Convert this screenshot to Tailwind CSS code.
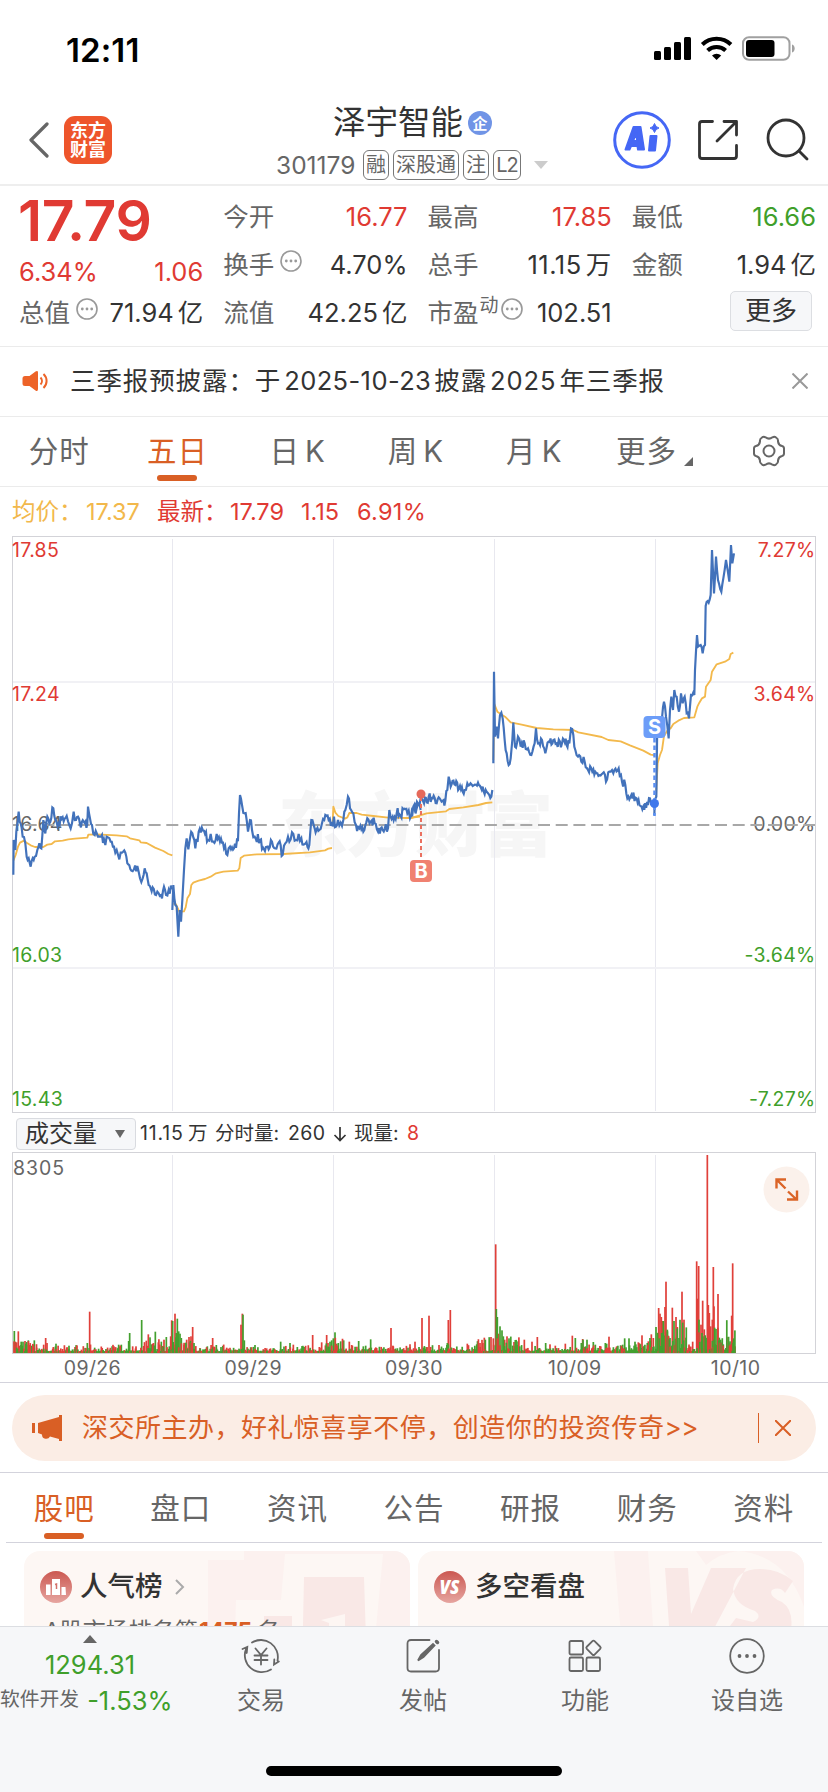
<!DOCTYPE html>
<html lang="zh-CN">
<head>
    <meta charset="UTF-8">
    <meta name="viewport" content="width=device-width, initial-scale=1.0">
    <title>泽宇智能 301179</title>
    <script src="https://cdn.jsdelivr.net/npm/@tailwindcss/browser@4"></script>
</head>
<body class="bg-white text-[#333] font-[Inter,'Noto_Sans_CJK_SC',sans-serif] leading-none">
<div class="w-[828px] h-[1792px] overflow-hidden flex flex-col whitespace-nowrap">

    <!-- Status bar -->
    <div class="h-[98px] shrink-0 flex justify-between items-center pl-[66px] pr-[32px]">
        <div class="text-[33px] font-semibold text-black tracking-[0.1px] pt-[2px]">12:11</div>
        <svg class="w-[144px] h-[28px]" viewBox="0 0 144 28">
            <g fill="#000">
                <rect x="2" y="16" width="7" height="9" rx="1.5"/>
                <rect x="12" y="12" width="7" height="13" rx="1.5"/>
                <rect x="22" y="7" width="7" height="18" rx="1.5"/>
                <rect x="32" y="2" width="7" height="23" rx="1.5"/>
            </g>
            <g fill="none" stroke="#000" stroke-width="4">
                <path d="M50.300 9.500a20.500 20.500 0 0 1 28.600 0"/>
                <path d="M55.600 15.500a13 13 0 0 1 18 0"/>
            </g>
            <path d="M60 20.500a7 7 0 0 1 9.200 0L64.600 25z"/>
            <rect x="91" y="2.200" width="46.500" height="22.600" rx="6" fill="none" stroke="#a0a0a0" stroke-width="2"/>
            <rect x="94" y="5" width="28.500" height="17" rx="3"/>
            <path d="M140 9.500c3.600 1 3.600 7 0 8z" fill="#a0a0a0"/>
        </svg>
    </div>

    <!-- Header -->
    <header class="h-[88px] shrink-0 border-b-2 border-[#eeeeee] flex relative">
        <div class="flex items-center pl-7 gap-[15px] h-[84px]">
            <svg class="w-[21px] h-[36px]" viewBox="0 0 21 36" fill="none" stroke="#666" stroke-width="3.200" stroke-linecap="round" stroke-linejoin="round"><path d="M19 2L3 18l16 16"/></svg>
            <div class="w-12 h-12 rounded-[11px] bg-[#ee552b] text-white text-[18px] leading-[19px] font-bold flex flex-col items-center justify-center">
                <span>东方</span><span>财富</span>
            </div>
        </div>
        <div class="absolute left-[276px] w-[276px] top-[8px]">
            <div class="flex items-center pl-[57px] gap-[5px] h-[34px]">
                <span class="text-[32.500px]">泽宇智能</span>
                <span class="w-6 h-6 rounded-full bg-[#7094e6] text-white text-[15px] font-bold flex items-center justify-center">企</span>
            </div>
            <div class="flex items-center h-[30px] mt-[10px] text-[#666]">
                <span class="text-[24.500px] w-[87px]">301179</span>
                <div class="flex gap-[4px] text-[20px]">
                    <span class="h-[30px] w-[26px] border border-[#777] rounded-[6px] flex items-center justify-center">融</span>
                    <span class="h-[30px] w-[66px] border border-[#777] rounded-[6px] flex items-center justify-center">深股通</span>
                    <span class="h-[30px] w-[26px] border border-[#777] rounded-[6px] flex items-center justify-center">注</span>
                    <span class="h-[30px] w-[28px] border border-[#777] rounded-[6px] flex items-center justify-center tracking-[-1px]">L2</span>
                </div>
                <svg class="w-[14px] h-[8px] ml-[13px]" viewBox="0 0 14 8"><path d="M0 0h14L7 8z" fill="#ccc"/></svg>
            </div>
        </div>
        <svg class="absolute left-[612px] top-[12px] w-[200px] h-[60px]" viewBox="0 0 200 60" fill="none">
            <circle cx="30" cy="30" r="27.300" stroke="#4567f5" stroke-width="3"/>
            <g fill="#4567f5" stroke="#4567f5" stroke-linejoin="round">
                <path d="M13.500 39.500h4l1.500-3.500h6.500l.5 3.500h6L28.500 17h-7zM21 31l3.300-8 .9 8z" stroke-width="2" fill-rule="evenodd"/>
                <path d="M38.500 26h6l-1.500 14.500h-6z" stroke-width="2"/>
                <path d="M42.500 13.500q1 3.800 4.500 4.500-3.500.9-4.500 4.500-.9-3.600-4.500-4.500 3.600-.7 4.500-4.500z" stroke-width="1"/>
            </g>
            <g stroke="#333" stroke-width="2.800" stroke-linecap="round" stroke-linejoin="round">
                <path d="M100.500 11.500H90q-2.500 0-2.500 2.500v32q0 2.500 2.500 2.500h32q2.500 0 2.500-2.500V35.500"/>
                <path d="M112 11.500h12.500V25M124 12l-19 19"/>
                <circle cx="174" cy="28" r="18"/>
                <path d="M187 41l8 8"/>
            </g>
        </svg>
    </header>

    <!-- Quote -->
    <section class="h-[161px] shrink-0 border-b border-[#ebebeb] pt-[7px] pl-[19px] pr-[12px] grid grid-cols-4 gap-x-5 text-[25.5px]">
        <div class="text-[#e03a33]">
            <div class="h-[54px] flex items-center text-[57px] font-semibold tracking-[-0.4px] -ml-px">17.79</div>
            <div class="h-[49px] flex items-center justify-between"><span>6.34%</span><span>1.06</span></div>
            <div class="h-[34px] flex items-center justify-between text-[#333]">
                <span class="flex items-center gap-[6px] text-[#666]">总值<svg class="w-[22px] h-[22px] -mt-2"><use href="#tip"/></svg></span><span>71.94<span class="ml-[4px]">亿</span></span>
            </div>
        </div>
        <div>
            <div class="h-12 flex items-center justify-between"><span class="text-[#666]">今开</span><span class="text-[#e03a33]">16.77</span></div>
            <div class="h-12 flex items-center justify-between"><span class="flex items-center gap-[6px] text-[#666]">换手<svg class="w-[22px] h-[22px] -mt-2"><use href="#tip"/></svg></span><span>4.70%</span></div>
            <div class="h-12 flex items-center justify-between"><span class="text-[#666]">流值</span><span>42.25<span class="ml-[4px]">亿</span></span></div>
        </div>
        <div>
            <div class="h-12 flex items-center justify-between"><span class="text-[#666]">最高</span><span class="text-[#e03a33]">17.85</span></div>
            <div class="h-12 flex items-center justify-between"><span class="text-[#666]">总手</span><span class="tracking-[0.5px]">11.15<span class="ml-[4px]">万</span></span></div>
            <div class="h-12 flex items-center justify-between">
                <span class="flex items-center text-[#666]">市盈<span class="text-[19px] -mt-4 ml-px mr-[2px]">动</span><svg class="w-[22px] h-[22px] -mt-2"><use href="#tip"/></svg></span><span>102.51</span>
            </div>
        </div>
        <div>
            <div class="h-12 flex items-center justify-between"><span class="text-[#666]">最低</span><span class="text-[#3f9f2b]">16.66</span></div>
            <div class="h-12 flex items-center justify-between"><span class="text-[#666]">金额</span><span>1.94<span class="ml-[4px]">亿</span></span></div>
            <div class="h-12 flex items-center justify-end pr-1">
                <button class="w-[82px] h-10 -mt-1 rounded-[5px] border border-[#dcdee2] bg-[#f6f7f9] text-[26px]">更多</button>
            </div>
        </div>
    </section>

    <svg class="hidden">
        <symbol id="tip" viewBox="0 0 22 22">
            <circle cx="11" cy="11" r="10" fill="none" stroke="#999" stroke-width="1.600"/>
            <g fill="#999"><circle cx="6.300" cy="11" r="1.400"/><circle cx="11" cy="11" r="1.400"/><circle cx="15.700" cy="11" r="1.400"/></g>
        </symbol>
    </svg>

    <!-- Notice -->
    <section class="h-[70px] shrink-0 border-b border-[#ebebeb] flex items-center pl-[22px] pr-[20px] pb-px">
        <svg class="w-[27px] h-[22px]" viewBox="0 0 27 22">
            <path d="M3 6h4.500l6-4.500q2.500-1.300 2.500 1V19q0 3-2.500 1.500l-6-4.500H3q-2.500 0-2.500-2.500v-5Q.5 6 3 6z" fill="#ed6328"/>
            <path d="M18.500 7.500a5 5 0 0 1 0 7M21.500 4a9.500 9.500 0 0 1 0 14" fill="none" stroke="#ed6328" stroke-width="2"/>
        </svg>
        <div class="ml-[21px] text-[25.5px] tracking-[0.9px]">三季报预披露：于<span class="mx-[3px] tracking-[0.4px]">2025-10-23</span>披露<span class="mx-[3px]">2025</span>年三季报</div>
        <svg class="w-[16px] h-[16px] ml-auto" viewBox="0 0 16 16" stroke="#999" stroke-width="2"><path d="M.5.5l15 15M15.500.5l-15 15"/></svg>
    </section>

    <!-- Period tabs -->
    <nav class="h-[70px] shrink-0 border-b border-[#ebebeb] grid grid-cols-7 text-[29.500px] tracking-[1px] text-[#666] text-center">
        <div class="pt-[20px]">分时</div>
        <div class="pt-[20px] text-[#d95f25] flex flex-col items-center">五日<span class="w-10 h-[6px] rounded-full bg-[#d95f25] mt-[8px]"></span></div>
        <div class="pt-[20px] pl-1">日<span class="ml-[5px]">K</span></div>
        <div class="pt-[20px] pl-1">周<span class="ml-[5px]">K</span></div>
        <div class="pt-[20px] pl-1">月<span class="ml-[5px]">K</span></div>
        <div class="pt-[20px] pl-2 flex justify-center">更多<svg class="w-[9px] h-[9px] ml-[7px] mt-[20px]" viewBox="0 0 9 9"><path d="M9 0v9H0z" fill="#666"/></svg></div>
        <div class="pt-[18px] flex justify-center">
            <svg class="w-[34px] h-[32px]" viewBox="0 0 34 32" fill="none" stroke="#666" stroke-width="2" stroke-linejoin="round">
                <path d="M10 2.500Q11.500 1 13.500 2.300Q17 5 20.500 2.300Q22.500 1 24 2.500Q26.500 4 26 6.500Q26.500 10.300 30 11Q32 11.500 32 13.500V18.500Q32 20.500 30 21Q26.500 21.700 26 25.500Q26.500 28 24 29.500Q22.500 31 20.500 29.700Q17 27 13.500 29.700Q11.500 31 10 29.500Q7.500 28 8 25.500Q7.500 21.700 4 21Q2 20.500 2 18.500V13.500Q2 11.500 4 11Q7.500 10.300 8 6.500Q7.500 4 10 2.500Z"/>
                <circle cx="17" cy="16" r="5.500"/>
            </svg>
        </div>
    </nav>

    <!-- Legend -->
    <div class="h-[49px] shrink-0 flex items-center pl-3 text-[23.500px] text-[#e03a33]">
        <span class="w-[145px] text-[#f2b84b] flex"><span class="w-[74px]">均价：</span>17.37</span>
        <span class="w-[144px] flex"><span class="w-[73px]">最新：</span>17.79</span>
        <span class="w-[56px]">1.15</span>
        <span class="tracking-[0.3px]">6.91%</span>
    </div>

    <!-- Price chart -->
    <svg class="w-[828px] h-[578px] shrink-0" viewBox="0 536 828 578" font-family="Inter,'Noto Sans CJK SC',sans-serif">
        <text x="278" y="851" font-size="70" font-weight="900" fill="#f6f6f6" textLength="275">东方财富</text>
        <g fill="none" stroke="#e8e8ef">
            <path d="M172.500 539V1111M333.500 539V1111M494.500 539V1111M655.500 539V1111"/>
            <path d="M13 682H815M13 968H815" stroke="#f1f1f5" stroke-width="2"/>
            <rect x="12.500" y="536.500" width="803" height="576" stroke="#d3d3d8"/>
        </g>
        <g font-size="19.500" letter-spacing="0.3" id="priceLabels"></g>
        <path d="M13 825H815" stroke="#a8a8a8" stroke-width="1.800" stroke-dasharray="12 5.700" stroke-dashoffset="6"/>
        <!-- average price -->
        <g fill="none" stroke="#f3b94c" stroke-width="5.500" stroke-linejoin="round">
            <g transform="translate(0 480) scale(.33333)">
                <path d="M40 1142L47 1125 54 1100 60 1088 72 1082 80 1088 92 1096 105 1101 130 1101 142 1094 155 1092 165 1084 188 1082 205 1078 225 1076 262 1073 265 1064 290 1063 350 1066 380 1069 390 1075 418 1081 422 1087 440 1089 465 1103 490 1113 505 1122 517 1126"/>
                <path d="M520 1270L528 1273 538 1295 552 1294 557 1282 562 1255 570 1242 574 1215 580 1208 596 1202 615 1197 632 1190 648 1180 670 1175 713 1172 718 1165 722 1134 732 1127 770 1123 850 1122 930 1117 975 1111 985 1106 996 1104"/>
                <path d="M998 1030L1000 980 1006 998 1015 1008 1035 1016 1042 1012 1048 999 1070 999 1085 1004 1120 1008 1165 1013 1225 1014 1260 1010"/>
            </g>
            <g transform="translate(410 480) scale(.33333)">
                <path d="M0 1015L30 1006 50 1000 108 994 118 987 160 982 205 975 228 969 247 967"/>
                <path d="M250 840L253 672 262 695 285 710 302 727 335 734 380 744 430 748 490 750 505 757 575 771 595 780 632 784 660 796 700 812 722 824 735 826"/>
                <path d="M738 950L743 850 750 825 756 810 762 768 772 752 782 745 790 732 805 722 822 714 853 712 862 680 868 668 876 655 885 650 888 620 902 600 906 575 920 553 945 545 958 537 962 522 970 518"/>
            </g>
        </g>
        <!-- last price -->
        <g fill="none" stroke="#4272bb" stroke-width="6.500" stroke-linejoin="miter">
            <g transform="translate(0 480) scale(.33333)">
                <path id="lineA" />
                <path id="lineB" />
                <path id="lineC" />
            </g>
            <g transform="translate(410 480) scale(.33333)">
                <path id="lineD" />
                <path id="lineE" />
                <path id="lineF" />
            </g>
        </g>
        <!-- buy and sell marks -->
        <path d="M421 797V860" stroke="#ea705f" stroke-width="2" stroke-dasharray="4 3"/>
        <circle cx="421" cy="794" r="4.500" fill="#e5695a"/>
        <rect x="410" y="860" width="22" height="22" rx="4" fill="#f08171"/>
        <text x="421" y="878" font-size="20" font-weight="700" fill="#fff" text-anchor="middle">B</text>
        <path d="M654.500 738V816" stroke="#5a8ff2" stroke-width="2.500" stroke-dasharray="4.500 3"/>
        <circle cx="654.500" cy="803.500" r="4.500" fill="#3f78ec"/>
        <rect x="643.500" y="716" width="22" height="22" rx="4" fill="#6c9df8"/>
        <text x="654.500" y="734.300" font-size="20" font-weight="700" fill="#fff" text-anchor="middle">S</text>
    </svg>

    <!-- Volume header -->
    <div class="h-[38px] shrink-0 flex items-center pl-4 pt-px text-[19.500px]">
        <div class="w-[120px] h-8 rounded-[4px] border border-[#d9dbe0] bg-[#f6f7f9] flex items-center justify-between pl-[8px] pr-[10px] text-[24px]">成交量
            <svg class="w-[10px] h-[8px]" viewBox="0 0 10 8"><path d="M0 0h10L5 8z" fill="#666"/></svg>
        </div>
        <span class="ml-1 flex items-center"><span class="w-[48px] tracking-[0.8px]">11.15</span><span class="w-[27px]">万</span><span class="w-[73px]">分时量:</span><span class="w-[45px] tracking-[0.4px]">260</span>
            <svg class="w-[14px] h-[16px] mr-[7px]" viewBox="0 0 14 16" fill="none" stroke="#333" stroke-width="1.700"><path d="M7 1v13M1.500 9L7 14.500 12.500 9"/></svg>
            <span class="w-[53px]">现量:</span><span class="text-[#e03a33]">8</span></span>
    </div>

    <!-- Volume chart -->
    <svg class="w-[828px] h-[202px] shrink-0" viewBox="0 1152 828 202" font-family="Inter,sans-serif">
        <g fill="none" stroke="#e8e8ef">
            <path d="M172.500 1155V1353M333.500 1155V1353M494.500 1155V1353M655.500 1155V1353"/>
            <rect x="12.500" y="1152.500" width="803" height="201" stroke="#d3d3d8"/>
        </g>
        <text x="13" y="1174.500" font-size="19.500" fill="#666" textLength="51">8305</text>
        <g id="volume"></g>
        <circle cx="786.500" cy="1189.500" r="23" fill="#fbf1eb"/>
        <g fill="none" stroke="#db6427" stroke-width="2.400">
            <path d="M786 1179.500h-9.500v9M777 1180l8.500 8.500"/>
            <path d="M787 1199.500h10v-9M796.500 1199.500l-8.500-8"/>
        </g>
    </svg>
    <div class="h-[29px] shrink-0 border-b border-[#d3d3dc] px-3">
        <div class="w-[804px] grid grid-cols-5 pt-[5px] text-center text-[19.500px] tracking-[0.4px] text-[#666]">
            <span>09/26</span><span>09/29</span><span>09/30</span><span>10/09</span><span>10/10</span>
        </div>
    </div>

    <!-- Banner -->
    <div class="h-[90px] shrink-0 border-b border-[#d3d3dc] px-3 pt-3">
        <div class="h-[66px] rounded-full bg-[#fbede5] text-[#d95f25] flex items-center pl-5 pr-[25px]">
            <svg class="w-[30px] h-[26px]" viewBox="0 0 30 26" fill="#d95f25">
                <path d="M0 8h3v10H0zM6 8l21-6V0h3v26h-3v-2l-9-2.500q-1.500 3-5.500 2-2.500-.5-2.500-4l-4-1.500z"/>
            </svg>
            <span class="ml-[20px] text-[26px] tracking-[0.48px]">深交所主办，好礼惊喜享不停，创造你的投资传奇<span class="tracking-[-0.500px]">&gt;&gt;</span></span>
            <span class="ml-auto w-px h-[30px] bg-[#d95f25]"></span>
            <svg class="w-[16px] h-[16px] ml-4" viewBox="0 0 16 16" stroke="#d95f25" stroke-width="2"><path d="M0 0l16 16M16 0L0 16"/></svg>
        </div>
    </div>

    <!-- Section tabs -->
    <nav class="h-[70px] shrink-0 mx-1.5 border-b border-[#d3d3dc] grid grid-cols-7 text-[29.500px] tracking-[1px] text-[#666] text-center">
        <div class="pt-[21px] text-[#d95f25] flex flex-col items-center">股吧<span class="w-10 h-[6px] rounded-full bg-[#d95f25] mt-[9px]"></span></div>
        <div class="pt-[21px]">盘口</div>
        <div class="pt-[21px]">资讯</div>
        <div class="pt-[21px]">公告</div>
        <div class="pt-[21px]">研报</div>
        <div class="pt-[21px]">财务</div>
        <div class="pt-[21px]">资料</div>
    </nav>

    <!-- Cards, cut off by the bottom bar -->
    <div class="h-[83px] shrink-0 overflow-hidden px-6 pt-2 grid grid-cols-2 gap-2">
        <div class="h-[120px] rounded-2xl overflow-hidden bg-[#fdf7f4] relative">
            <svg class="absolute right-0 top-0 w-[202px] h-[120px]" viewBox="0 0 202 120">
                <path d="M0 9h36V0h166v120H164L175 3H77L73 49H28L26 120H0z" fill="#fcf1ef"/>
                <path d="M96 26h60l3 94H94zM56 65h28v55H56z" fill="#f9e8e6"/>
                <path d="M113 69l24-6v57h-16V72z" fill="#fdf6f3"/>
            </svg>
            <div class="relative flex items-center pl-4 pt-5">
                <svg class="w-8 h-8" viewBox="0 0 32 32">
                    <defs><linearGradient id="badge" x1="0" y1="0" x2="0" y2="1"><stop offset="0" stop-color="#cb5851"/><stop offset="1" stop-color="#e6a5a0"/></linearGradient></defs>
                    <circle cx="16" cy="16" r="16" fill="url(#badge)"/>
                    <path d="M6 13.500h4.500V24H6zM12 8h8v16h-8zM21.500 16h4l.5 8h-4.500z" fill="#fff"/>
                    <path d="M15 13.500l1.500-.5v5" fill="none" stroke="#d2716b" stroke-width="1.500"/>
                </svg>
                <span class="ml-[8px] text-[27.500px] font-medium">人气榜</span>
                <svg class="w-[10px] h-[16px] ml-3" viewBox="0 0 10 16" fill="none" stroke="#aaa" stroke-width="2"><path d="M1 1l7 7-7 7"/></svg>
            </div>
            <div class="relative pl-[20px] mt-[17px] text-[23px] text-[#666]">A股市场排名第<span class="font-bold text-[#d95f25] ml-px mr-[3px]">1475</span><span class="ml-[2px]">名</span></div>
        </div>
        <div class="h-[120px] rounded-2xl overflow-hidden bg-[#fdf7f4] relative">
            <svg class="absolute right-0 top-0 w-[190px] h-[120px]" viewBox="0 0 190 120">
                <path d="M0 0h34l8 120H10z" fill="#fcf1ef"/>
                <path d="M82 0h108v56Q172 4 124 0Q106 2 92 14z" fill="#fcf1ef"/>
                <path d="M51 17h23l3 46 20-46h35l-38 72H56zM179 30q-14-12-33-12-24 0-27 20 2 16 22 22 8 6-2 11l-17-4-12 16 60 20q16-40-2-52-14-6-10-12 8-4 13 3z" fill="#f9e8e6"/>
            </svg>
            <div class="relative flex items-center pl-4 pt-5">
                <svg class="w-8 h-8" viewBox="0 0 32 32">
                    <circle cx="16" cy="16" r="16" fill="url(#badge)"/>
                    <text x="15.500" y="23" text-anchor="middle" font-family="Open Sans" font-size="19" font-weight="800" font-style="italic" fill="#fff" textLength="20" lengthAdjust="spacingAndGlyphs">VS</text>
                </svg>
                <span class="ml-[9px] text-[27.500px] font-medium">多空看盘</span>
            </div>
        </div>
    </div>

    <!-- Bottom bar -->
    <footer class="h-[166px] shrink-0 border-t border-[#dcdee2] bg-[#f6f7f9] text-[#666] text-[24px] relative flex">
        <div class="w-[180px] flex flex-col items-center pt-[8px]">
            <svg class="w-[14px] h-[8px]" viewBox="0 0 14 8"><path d="M0 8h14L7 0z" fill="#666"/></svg>
            <span class="mt-[9px] text-[25.5px] text-[#3f9f2b]">1294.31</span>
            <div class="w-full flex items-center mt-[10px]"><span class="text-[19.800px]">软件开发</span><span class="ml-[8px] text-[25.5px] text-[#3f9f2b]">-1.53%</span></div>
        </div>
        <div class="flex-1 flex flex-col items-center pt-[11px]">
            <svg class="w-10 h-9" viewBox="0 0 40 36" fill="none" stroke="#666" stroke-width="1.800" stroke-linecap="round">
                <path d="M11 4.500A17 17 0 0 1 36.500 22.500M37.800 23.500l-4.800 3 .3-5"/>
                <path d="M30 31.500A17 17 0 0 1 5.200 10.500M1.500 11l4.800-2-.6 6"/>
                <path d="M14.500 10.500L20 17l5.500-6.500M20 17v9.500M13.500 17.500h13M13.500 22h13"/>
            </svg>
            <span class="mt-[15px]">交易</span>
        </div>
        <div class="flex-1 flex flex-col items-center pt-[11px]">
            <svg class="w-9 h-9 ml-[2px]" viewBox="0 0 36 36" fill="none" stroke="#666" stroke-width="1.800" stroke-linecap="round">
                <path d="M23.500 2H5Q1.500 2 1.500 5.500V30Q1.500 33.500 5 33.500H29.500Q33 33.500 33 30V12"/>
                <path d="M12 22.500l3-5.500L27 6l1.500 1.500L17.500 19z" fill="#666"/><path d="M30.500 3.500l1 1" stroke-width="3.500"/>
            </svg>
            <span class="mt-[15px]">发帖</span>
        </div>
        <div class="flex-1 flex flex-col items-center pt-[11px]">
            <svg class="w-9 h-9" viewBox="0 0 36 36" fill="none" stroke="#666" stroke-width="1.800" stroke-linejoin="round">
                <rect x="2.500" y="3" width="13.500" height="13.500" rx="1.500"/><rect x="2.500" y="19.500" width="13.500" height="13.500" rx="1.500"/><rect x="19.500" y="19.500" width="13.500" height="13.500" rx="1.500"/>
                <rect x="21" y="4.300" width="11" height="11" rx="1.500" transform="rotate(45 26.500 9.800)"/>
            </svg>
            <span class="mt-[15px]">功能</span>
        </div>
        <div class="flex-1 flex flex-col items-center pt-[11px]">
            <svg class="w-9 h-9" viewBox="0 0 36 36"><circle cx="18" cy="18" r="16.800" fill="none" stroke="#666" stroke-width="1.800"/><g fill="#666"><circle cx="10.500" cy="18" r="1.900"/><circle cx="18" cy="18" r="1.900"/><circle cx="25.500" cy="18" r="1.900"/></g></svg>
            <span class="mt-[15px]">设自选</span>
        </div>
        <div class="absolute left-[266px] top-[139px] w-[296px] h-[10px] rounded-full bg-black"></div>
    </footer>
</div>

<script>
    // small seeded generator, so the charts are the same on every load
    let seed = 7;
    function rnd() {
        seed = (seed * 16807) % 2147483647;
        return seed / 2147483647;
    }

    // Price axis
    const labels = [
        ['17.85', '7.27%', 557, '#e03a33'],
        ['17.24', '3.64%', 701, '#e03a33'],
        ['16.64', '0.00%', 831, '#666'],
        ['16.03', '-3.64%', 962, '#3f9f2b'],
        ['15.43', '-7.27%', 1106, '#3f9f2b'],
    ];
    document.getElementById('priceLabels').innerHTML = labels.map(l => `
        <text x="12" y="${l[2]}" fill="${l[3]}">${l[0]}</text>
        <text x="815.5" y="${l[2]}" fill="${l[3]}" text-anchor="end">${l[1]}</text>
    `).join('');

    // Price lines: key points, with ticks filled in between them
    const lines = {
        lineA: [14, [40,1184,41,1080,46,1110,52,1030,56,995,62,1030,68,1070,76,1090,80,1130,86,1135,92,1160,98,1135,104,1130,112,1110,118,1090,124,1105,130,1020,136,1060,142,1010,148,1030,160,985,166,1020,176,1030,188,1012,200,1008,208,1035,216,1030,221,995,228,1020,234,1010,240,1032,262,1030,264,980,270,1015,276,1035,284,1065,300,1070,312,1078,316,1095,324,1072,332,1085,342,1100,350,1110,358,1138,366,1118,376,1118,382,1150,394,1172,402,1168,412,1158,420,1195,428,1195,434,1165,440,1180,446,1215,458,1222,468,1245,476,1240,486,1255,492,1220,498,1245,506,1230,516,1228]],
        lineB: [13, [517,1290,520,1215,526,1275,530,1280,535,1370,539,1290,543,1325,547,1260,552,1170,556,1105,560,1075,565,1108,570,1075,577,1060,586,1105,596,1055,612,1052,624,1080,632,1062,640,1085,650,1062,660,1085,672,1105,682,1125,690,1100,702,1105,714,1080,717,1000,720,945,726,975,734,1000,740,1020,744,1055,750,1020,756,1050,764,1070,780,1080,792,1108,806,1108,816,1085,826,1105,836,1088,848,1125,856,1090,864,1070,872,1078,880,1062,888,1080,896,1062,904,1075,914,1092,928,1095,934,1020,944,1045,958,1050,966,1030,976,1005,986,1020,996,1025]],
        lineC: [15, [998,1040,1002,1010,1008,1040,1014,1020,1022,1028,1030,1020,1036,990,1044,950,1050,985,1060,1000,1068,1035,1078,1045,1090,1055,1102,1015,1112,1025,1124,1030,1134,1055,1148,1050,1164,1045,1168,990,1178,1010,1190,1000,1222,1000,1230,1015,1240,980,1248,985,1254,970,1262,990]],
        lineD: [14, [0,1010,10,985,20,985,32,955,42,970,56,950,68,955,80,970,92,960,106,962,112,930,116,890,122,920,136,915,150,918,164,930,172,910,188,918,204,908,218,920,230,935,238,945,247,930]],
        lineE: [13, [250,850,252,575,255,770,260,740,264,775,270,705,278,715,284,780,290,820,296,855,302,835,307,780,310,728,315,800,324,770,332,800,344,790,354,805,364,825,374,790,378,745,384,790,396,780,406,820,416,785,430,780,440,790,456,790,478,790,483,745,490,765,496,810,504,830,514,845,524,845,534,870,550,868,562,880,578,880,588,905,598,875,606,870,610,880,626,865,636,905,646,915,652,955,664,945,680,955,700,980,714,975,720,955,724,975]],
        lineF: [9, [733,1006,734,960,739,950,742,720,750,740,756,715,762,665,768,710,776,775,780,690,784,650,789,690,793,630,800,650,807,695,813,640,818,670,824,650,830,700,837,715,843,645,853,645,855,570,861,465,864,500,872,495,878,520,885,495,887,378,896,368,902,345,906,210,912,340,918,230,924,300,934,335,940,295,948,240,953,270,958,305,963,195,967,250,972,220]],
    };
    for (const id in lines) {
        const [amp, p] = lines[id];
        let d = `M${p[0]} ${p[1]}`;
        for (let i = 2; i < p.length; i += 2) {
            const dx = p[i] - p[i - 2], dy = p[i + 1] - p[i - 1];
            const n = Math.floor(dx / 2.7);
            for (let k = 1; k < n; k++) {
                d += `L${(p[i - 2] + dx * k / n).toFixed(1)} ${(p[i - 1] + dy * k / n + (rnd() - 0.5) * amp * 2.2).toFixed(1)}`;
            }
            d += `L${p[i]} ${p[i + 1]}`;
        }
        document.getElementById(id).setAttribute('d', d);
    }

    // Volume: spikes as "x:height" in thirds of a pixel, r = up tick, g = down tick
    const spikes = '43:66g 46:34r 50:32r 55:65r 59:22r 63:24g 67:22g 75:36r 80:25g 85:38g 90:24g 95:22g 99:25g 103:38g 110:16r 131:25r 137:45r 141:30r 160:18r 168:28g 200:16r 207:22g 225:18r 262:30g 269:124r 284:16g 318:12g 342:20r 356:25g 364:25g 386:36g 389:60g 398:20r 408:20r 425:99g 445:56r 450:47g 455:26g 460:20g 466:64g 475:32r 484:34g 492:40r 499:48g 508:20g 512:50r 515:98r 518:96g 525:118r 529:60g 532:103g 536:65g 540:58g 544:45g 552:25r 560:40r 567:48r 573:50r 578:78r 582:30g 600:15r 622:20g 638:45r 649:24g 680:16r 723:85r 727:118r 729:115g 733:38g 765:24g 800:14r 842:34g 870:30g 880:25r 892:18g 912:18g 938:54r 958:18r 965:32r 980:54r 984:30r 990:34g 995:38g 1000:44g 1005:62g 1010:28g 1015:30g 1022:35g 1031:38g 1048:34r 1055:24r 1076:36g 1090:20g 1097:22g 1112:41g 1130:15r 1173:75r 1180:20r 1224:16g 1230:18g 1245:34r 1257:18g 1266:105r 1287:112r 1317:24r 1345:99r 1351:129r 1342:30g 1345:26g 1402:28r 1430:26g 1440:30r 1453:46r 1456:40g 1473:48r 1480:44r 1487:326r 1489:132g 1492:108g 1495:58r 1500:80g 1506:68g 1510:50g 1514:40r 1521:50r 1527:44g 1531:35g 1542:33r 1548:20g 1573:40r 1596:34r 1612:48r 1637:30g 1650:26r 1666:22r 1696:28r 1717:52r 1726:45g 1744:30g 1748:42r 1749:40g 1761:40g 1780:33g 1786:25g 1816:30g 1820:28g 1827:49r 1850:20r 1868:25g 1874:44g 1887:44g 1905:34g 1915:32r 1926:53r 1942:30g 1945:35r 1950:45g 1954:56r 1960:45r 1968:78g 1976:135r 1980:118r 1984:108r 1988:96r 1985:60g 1990:96g 1995:138r 1998:214r 2002:70g 2006:50g 2010:45g 2017:136r 2022:96g 2028:108r 2032:78r 2037:45g 2046:184r 2052:100r 2058:46g 2068:20r 2078:34r 2090:275r 2093:163r 2096:261r 2097:100g 2103:85r 2108:157r 2106:60g 2112:50g 2122:594r 2125:144r 2128:120r 2132:80r 2137:100r 2140:258r 2142:140r 2144:76g 2148:72g 2154:177r 2158:46g 2162:40g 2170:26g 2181:48r 2186:30g 2190:35g 2195:112r 2198:269r 2201:44g 2205:20r';
    let bars = '';
    function bar(x, h, up) {
        bars += `<rect x="${(x / 3 - 0.85).toFixed(2)}" y="${(1353 - h / 3).toFixed(2)}" width="1.7" height="${(h / 3).toFixed(2)}" fill="${up ? '#e0403a' : '#43a02f'}"/>`;
    }
    spikes.split(' ').filter(s => s.endsWith('r')).forEach(s => bar(parseInt(s), parseInt(s.split(':')[1]), true));
    spikes.split(' ').filter(s => s.endsWith('g')).forEach(s => bar(parseInt(s), parseInt(s.split(':')[1]), false));
    // quiet minutes, busier around the open of each day
    const busy = [[40, 110, 40], [430, 590, 50], [970, 1060, 44], [1420, 1560, 54], [1860, 1965, 48], [1965, 2060, 120], [2090, 2205, 110]];
    for (let x = 42; x < 2206; x += 2.7) {
        const zone = busy.find(b => x >= b[0] && x <= b[1]);
        bar(x, 5 + rnd() * rnd() * (zone ? zone[2] : 22), rnd() > 0.6);
    }
    document.getElementById('volume').innerHTML = bars;
</script>
</body>
</html>
